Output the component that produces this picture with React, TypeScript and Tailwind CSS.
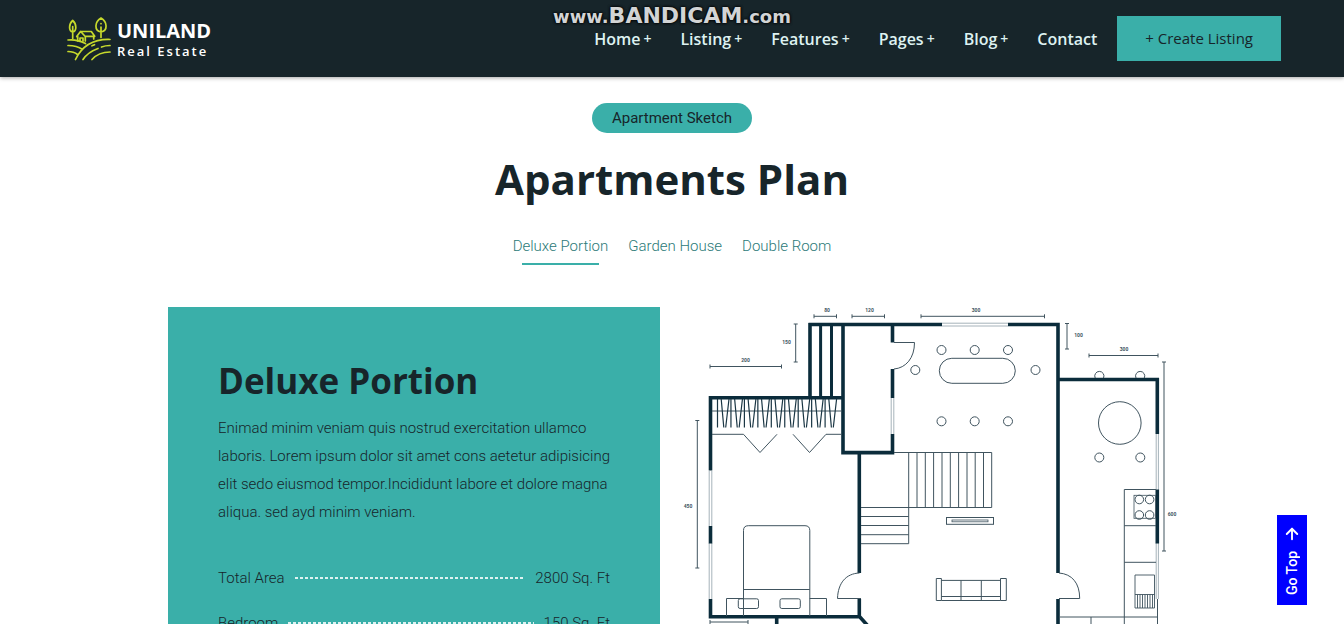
import { ArrowUp } from "lucide-react";

const nav = [
  { label: "Home", menu: true },
  { label: "Listing", menu: true },
  { label: "Features", menu: true },
  { label: "Pages", menu: true },
  { label: "Blog", menu: true },
  { label: "Contact", menu: false },
];

const tabs = ["Deluxe Portion", "Garden House", "Double Room"];

const specs = [
  { name: "Total Area", value: "2800 Sq. Ft" },
  { name: "Bedroom", value: "150 Sq. Ft" },
];

function LogoMark() {
  return (
    <svg viewBox="0 0 44 44" className="h-11 w-11" fill="none" stroke="#c6d92c" strokeWidth="1.7" strokeLinecap="round" strokeLinejoin="round" aria-hidden="true">
      <path d="M5.700 21.500V9.500M5.700 15c-4.300-1-4-8 0-11.500c4 3.500 4.300 10.500 0 11.500" />
      <path d="M34 20.500V10M34 15c-7-1.500-6.500-10 0-14c6.500 4 7 12.500 0 14M34 6.500v.2" />
      <path d="M9.700 19.500L13.500 14.500H24.300L27.700 19.300H18L13.700 14.500M10.700 19.500V24M18.300 19.500V24M26.700 19.500V22M13 24V21H16V24" />
      <path d="M1 23C7 22.300 13.500 24 18.500 26.500M1 28.500C7 28.500 12 30 15.500 32.500M1 34.500C5 34.500 8 35.500 10.500 37.500M43 22.500C27 22 15 29 8.500 42.500M43 28.500C39.500 28.500 37 29 34.500 30M31 31.500C24 34 19 38 16 42.500M43 35C35 35 29 38 25 42.500M25 28.800L27.500 27.700" />
    </svg>
  );
}

function Dim({ x1, y1, x2, y2 }: { x1: number; y1: number; x2: number; y2: number }) {
  const ticks = y1 === y2
    ? `M${x1} ${y1 - 2}v4M${x2} ${y1 - 2}v4`
    : `M${x1 - 2} ${y1}h4M${x1 - 2} ${y2}h4`;
  return <path d={`M${x1} ${y1}L${x2} ${y2}${ticks}`} />;
}

const dims = [
  [814, 316.3, 836.5, 316.3],
  [852, 316.3, 884.5, 316.3],
  [921, 316.3, 1044.5, 316.3],
  [710, 366.5, 781.5, 366.5],
  [1089, 355.5, 1158, 355.5],
  [795.7, 324, 795.7, 362],
  [1067, 323.5, 1067, 349],
  [697.3, 420.5, 697.3, 568],
  [1164, 362, 1164, 551],
  [710, 622, 748, 622],
];

const dimLabels: [number, number, string][] = [
  [827, 312, "80"],
  [869.5, 312, "120"],
  [976, 312, "300"],
  [745.5, 362, "200"],
  [786.5, 343.5, "150"],
  [1078.5, 337, "100"],
  [1124, 351, "300"],
  [688, 507.5, "450"],
  [1172, 516, "600"],
];

const chairs = [
  [941.5, 350], [974.7, 350], [1008, 350], [915.3, 370], [1035.5, 370],
  [941.5, 421.3], [974.7, 421.3], [1008, 421.3], [1099.3, 457.5], [1140.3, 457.5],
];

const burners = [[1139.3, 499.5], [1149.6, 499.5], [1139.3, 515], [1149.6, 515]];

function FloorPlan() {
  return (
    <svg viewBox="684 307 492 400" className="w-full overflow-visible" fill="none" role="img" aria-label="Deluxe Portion floor plan">
      <g stroke="#8fa0a8" strokeWidth="0.8">
        <path d="M942 323.200H1008M942 326H1008M891.200 398V434M893.800 398V434M709.200 471V526M711.800 471V526M709.200 543V599M711.800 543V599M1156.200 434V490M1158.400 434V490M1156.200 543V599M1158.400 543V599" />
      </g>
      <g stroke="#0b2c3b" strokeWidth="3.6">
        <path d="M808.500 324.500H942M1008 324.500H1059.800M1058 323V573M1058 599V707M810 323V398M843 323V453M708.800 397.800H843M710.500 396V470.600M710.500 526V543.500M710.500 599V618.500M709 616.800H861M841.200 452.600H894.300M892.500 323V342.500M892.500 369V398M892.500 434V454M859.300 453V573M859.300 599V618M859 616L877 636M776.700 618V707M1058 379.500H1159M1157.300 378V434M1157.300 489.500V543.500" />
        <path d="M820.600 325V397M831.500 325V397" strokeWidth="3" />
      </g>
      <g stroke="#40545f" strokeWidth="1">
        <path d="M894 342.500H914.500C914.500 358 906 368 894 369M861 598.500H837.500C838 583 846 573.500 859.500 573M1059 573C1072 574 1079.700 583 1079.700 598.500H1059" />
        <path d="M712 411H842" />
        {Array.from({ length: 9 }, (_, i) => 717.5 + i * 13.45).map((x) => (
          <path key={x} stroke="#1a3644" strokeWidth="1.200" d={`M${x} 399V427.500M${x + 3.7} 399L${x + 6.3} 427.500M${x + 11.5} 399L${x + 8.2} 427.500`} />
        ))}
        <path d="M712 434.300H743.500L760 452.500L777 434.300M793 434.300L809.500 452.500L826 434.300H842" />
        <path d="M743.500 616V530.500q0-4.800 4.800-4.800H805q4.800 0 4.800 4.800V616M743.500 589.500H809.700M743.500 598.500H726.500V616M809.700 598.500H826.500V616" />
        <rect x="738.300" y="598.800" width="20.200" height="9.700" rx="1.800" />
        <rect x="780" y="598.800" width="20.300" height="9.700" rx="1.800" />
        <path d="M894 452.500H991.700V507.500H861M908.700 452.500V543.700H861M861 516.500H908.700M861 525.500H908.700M861 534.700H908.700M917 452.500V507.500M925.300 452.500V507.500M933.600 452.500V507.500M942 452.500V507.500M950.300 452.500V507.500M958.600 452.500V507.500M967 452.500V507.500M975.200 452.500V507.500M983.500 452.500V507.500" />
        <rect x="946.500" y="517.500" width="47" height="6.800" />
        <rect x="952" y="520" width="36" height="1.800" strokeWidth="0.800" />
        <path d="M936.300 578.500H941.400V600.500H936.300ZM1000.500 578.500H1006.300V600.500H1000.500ZM941.400 580.400H1000.500M941.400 596.500H1000.500M941.400 600.500H1000.500M961 580.400V600.500M981.300 580.400V600.500" />
        <rect x="939.300" y="358.300" width="76" height="25" rx="12.500" />
        {chairs.map(([x, y]) => <circle key={`${x}-${y}`} cx={x} cy={y} r="4.500" />)}
        <path d="M1095.200 378A4.600 4.600 0 1 1 1103.500 378M1136 378A4.600 4.600 0 1 1 1144.300 378" />
        <circle cx="1119.800" cy="423" r="21.300" />
        <path d="M1156 489.500H1124.300V707M1124.300 525.700H1156M1124.300 562.300H1156M1059 617H1157.500M1091 617V707M1157.500 599V707" />
        <rect x="1134" y="495.300" width="21.500" height="23" strokeWidth="0.800" />
        {burners.map(([x, y]) => <circle key={`${x}-${y}`} cx={x} cy={y} r="4.300" />)}
        <path d="M1135 575H1154.500V608H1135ZM1135 594.500H1154.500M1137.500 594.500V608M1140 594.500V608M1142.500 594.500V608M1145 594.500V608M1147.500 594.500V608M1150 594.500V608M1152.500 594.500V608" strokeWidth="0.900" />
        {dims.map(([x1, y1, x2, y2]) => <Dim key={`${x1}-${y1}`} x1={x1} y1={y1} x2={x2} y2={y2} />)}
      </g>
      <g fill="#40545f" fontSize="5" fontWeight="700" textAnchor="middle">
        {dimLabels.map(([x, y, text]) => <text key={`${x}-${y}`} x={x} y={y}>{text}</text>)}
      </g>
    </svg>
  );
}

export default function App() {
  return (
    <div className="relative h-screen overflow-hidden bg-white font-['Roboto',sans-serif] text-[15px] text-[#17252a]">
      <header className="flex items-center justify-between bg-[#17252a] py-4 pr-[63px] pl-[67px] font-['Open_Sans',sans-serif] shadow-[0_1px_4px_rgba(0,0,0,0.35)]">
        <a href="#home" className="flex items-center gap-[6px] text-white">
          <LogoMark />
          <span className="flex flex-col">
            <span className="text-xl leading-6 font-bold">UNILAND</span>
            <span className="text-[13px] leading-4 font-semibold tracking-[2px]">Real Estate</span>
          </span>
        </a>
        <div className="flex items-center gap-5">
          <nav className="flex gap-[29px] text-base leading-5 font-semibold text-[#def2f1]">
            {nav.map((item) => (
              <a key={item.label} href={`#${item.label.toLowerCase()}`} className="flex items-center gap-[3px]">
                {item.label}
                {item.menu && <span className="text-sm leading-5">+</span>}
              </a>
            ))}
          </nav>
          <button type="button" className="h-[45px] bg-[#3aafa9] px-7 text-[15px]">+ Create Listing</button>
        </div>
      </header>

      <div className="pointer-events-none absolute inset-x-0 top-1 text-center font-['DejaVu_Sans',sans-serif] text-lg leading-6 font-bold text-[#d2d4d5] [text-shadow:0_0_3px_#000,0_0_3px_#000]">
        www.<span className="text-[22px] leading-6">BANDICAM</span>.com
      </div>

      <main className="mx-auto max-w-[1008px] pt-[26px]">
        <div className="flex flex-col items-center">
          <span className="rounded-full bg-[#3aafa9] px-5 py-[5px] leading-5">Apartment Sketch</span>
          <h2 className="mt-4 font-['Open_Sans',sans-serif] text-[42px] leading-[60px] font-bold">Apartments Plan</h2>
          <div role="tablist" className="mt-[26px] flex gap-5 font-light text-[#2b7a78]">
            {tabs.map((tab, i) => (
              <button key={tab} type="button" role="tab" aria-selected={i === 0} className="flex flex-col items-center gap-[6px] leading-[22px]">
                {tab}
                {i === 0 && <span className="h-[2px] w-4/5 bg-[#3aafa9]" />}
              </button>
            ))}
          </div>
        </div>

        <div className="mt-[42px] grid grid-cols-2 gap-6">
          <section className="bg-[#3aafa9] pt-[50px] pr-[30px] pb-12 pl-[50px] font-light">
            <h3 className="font-['Open_Sans',sans-serif] text-[35px] leading-[48px] font-bold">Deluxe Portion</h3>
            <p className="mt-[9px] leading-7">
              Enimad minim veniam quis nostrud exercitation ullamco laboris. Lorem ipsum dolor sit amet cons aetetur adipisicing elit sedo eiusmod tempor.Incididunt labore et dolore magna aliqua. sed ayd minim veniam.
            </p>
            <dl className="mt-10 mr-5 flex flex-col gap-[21px]">
              {specs.map((spec) => (
                <div key={spec.name} className="flex items-center gap-[10px] leading-6">
                  <dt>{spec.name}</dt>
                  <span className="h-[2px] flex-1 bg-[repeating-linear-gradient(90deg,#def2f1_0_3px,transparent_3px_5px)]" />
                  <dd>{spec.value}</dd>
                </div>
              ))}
            </dl>
          </section>
          <FloorPlan />
        </div>
      </main>

      <a href="#top" className="fixed right-[37px] bottom-[19px] flex h-[90px] w-[30px] flex-col items-center justify-between bg-[#0000ff] py-[10px] text-sm font-medium text-white">
        <ArrowUp size={18} strokeWidth={2.5} aria-hidden="true" />
        <span className="rotate-180 leading-4 [writing-mode:vertical-rl]">Go Top</span>
      </a>
    </div>
  );
}
